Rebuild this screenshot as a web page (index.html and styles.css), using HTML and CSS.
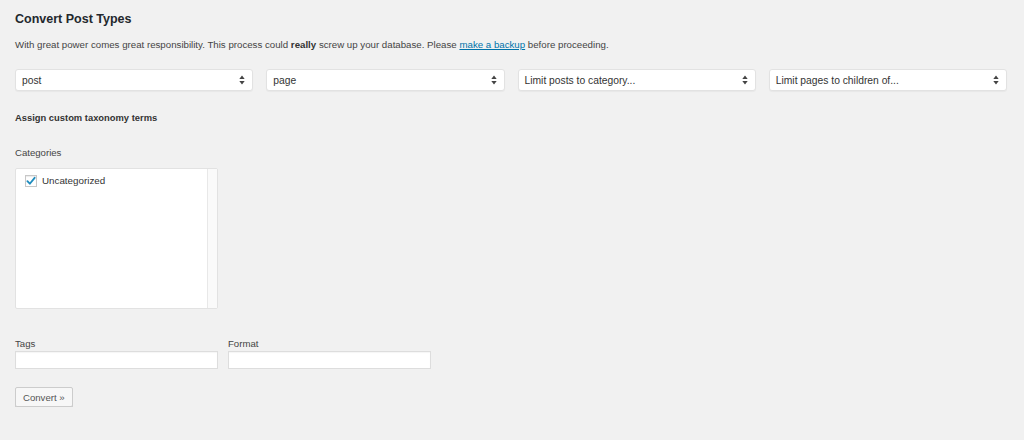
FILE: index.html
```html
<!DOCTYPE html>
<html>
<head>
<meta charset="utf-8">
<link rel="stylesheet" href="styles.css">
</head>
<body>
<div class="wrap">
  <h1 class="title">Convert Post Types</h1>
  <p class="intro">With great power comes great responsibility. This process could <strong>really</strong> screw up your database. Please <a href="#">make a backup</a> before proceeding.</p>
  <div class="selects">
    <div class="select"><span>post</span><svg class="arrows" width="6" height="10" viewBox="0 0 6 10"><path d="M3 0.5 L5.7 4 L0.3 4 Z M3 9.5 L5.7 6 L0.3 6 Z" fill="#444"/></svg></div>
    <div class="select"><span>page</span><svg class="arrows" width="6" height="10" viewBox="0 0 6 10"><path d="M3 0.5 L5.7 4 L0.3 4 Z M3 9.5 L5.7 6 L0.3 6 Z" fill="#444"/></svg></div>
    <div class="select"><span>Limit posts to category...</span><svg class="arrows" width="6" height="10" viewBox="0 0 6 10"><path d="M3 0.5 L5.7 4 L0.3 4 Z M3 9.5 L5.7 6 L0.3 6 Z" fill="#444"/></svg></div>
    <div class="select"><span>Limit pages to children of...</span><svg class="arrows" width="6" height="10" viewBox="0 0 6 10"><path d="M3 0.5 L5.7 4 L0.3 4 Z M3 9.5 L5.7 6 L0.3 6 Z" fill="#444"/></svg></div>
  </div>
  <h3 class="subhead">Assign custom taxonomy terms</h3>
  <div class="label cat-label">Categories</div>
  <div class="catbox">
    <div class="catlist">
      <label class="catitem"><span class="check"><svg width="11" height="10" viewBox="0 0 11 10"><path d="M1.5 5.2 L4.2 8 L9.5 1.5" fill="none" stroke="#1e8cbe" stroke-width="2" stroke-linecap="round" stroke-linejoin="round"/></svg></span>Uncategorized</label>
    </div>
    <div class="scrollbar"></div>
  </div>
  <div class="fields">
    <div class="field">
      <div class="label">Tags</div>
      <div class="input"></div>
    </div>
    <div class="field">
      <div class="label">Format</div>
      <div class="input"></div>
    </div>
  </div>
  <button class="button">Convert &raquo;</button>
</div>
</body>
</html>
```

FILE: styles.css
```css
html, body {
  margin: 0;
  padding: 0;
  background: #f1f1f1;
}
body {
  font-family: "Liberation Sans", Arial, sans-serif;
  font-size: 10px;
  color: #444;
}
.wrap {
  padding: 0 17px 0 15px;
}
.title {
  margin: 0;
  padding-top: 9px;
  font-size: 12.5px;
  line-height: 20px;
  font-weight: 700;
  color: #23282d;
}
.intro {
  margin: 8px 0 0;
  font-size: 9.7px;
  line-height: 16px;
  color: #444;
}
.intro strong { color: #333; }
.intro a {
  color: #0073aa;
  text-decoration: underline;
}
.selects {
  margin-top: 16px;
  display: grid;
  grid-template-columns: repeat(4, 1fr);
  gap: 13px;
}
.select {
  height: 20px;
  background: #fff;
  border: 1px solid #e2e2e2;
  border-radius: 3px;
  box-shadow: 0 1px 1px rgba(0,0,0,0.04);
  display: flex;
  align-items: center;
  justify-content: space-between;
  padding: 0 7px 0 6px;
  font-size: 10.3px;
  color: #333;
}
.arrows { display: block; }
.subhead {
  margin: 20px 0 0;
  font-size: 9.4px;
  line-height: 14px;
  font-weight: 700;
  color: #333;
}
.label {
  font-size: 9.6px;
  line-height: 14px;
  color: #444;
}
.cat-label {
  margin-top: 21px;
}
.catbox {
  margin-top: 8px;
  width: 201px;
  height: 139px;
  background: #fff;
  border: 1px solid #e2e2e2;
  border-radius: 2px;
  display: flex;
}
.catlist {
  flex: 1;
  padding: 5px 9px;
}
.scrollbar {
  width: 9px;
  background: #fafafa;
  border-left: 1px solid #e8e8e8;
}
.catitem {
  display: flex;
  align-items: center;
  gap: 5px;
  font-size: 9.8px;
  color: #333;
  line-height: 14px;
}
.check {
  width: 10px;
  height: 10px;
  border: 1px solid #c7c7c7;
  background: #fff;
  box-shadow: inset 0 1px 1px rgba(0,0,0,0.08);
  display: flex;
  align-items: center;
  justify-content: center;
}
.fields {
  margin-top: 28px;
  display: flex;
  gap: 10px;
}
.field .label { margin-bottom: 0; }
.input {
  width: 201px;
  height: 16px;
  background: #fff;
  border: 1px solid #dddddd;
  box-shadow: inset 0 1px 1px rgba(0,0,0,0.04);
}
.button {
  margin-top: 18px;
  display: block;
  height: 20px;
  padding: 0 7px;
  background: #f7f7f7;
  border: 1px solid #cccccc;
  border-radius: 2px;
  box-shadow: 0 1px 0 #ccc;
  font-family: "Liberation Sans", Arial, sans-serif;
  font-size: 9.6px;
  color: #555;
}
```
